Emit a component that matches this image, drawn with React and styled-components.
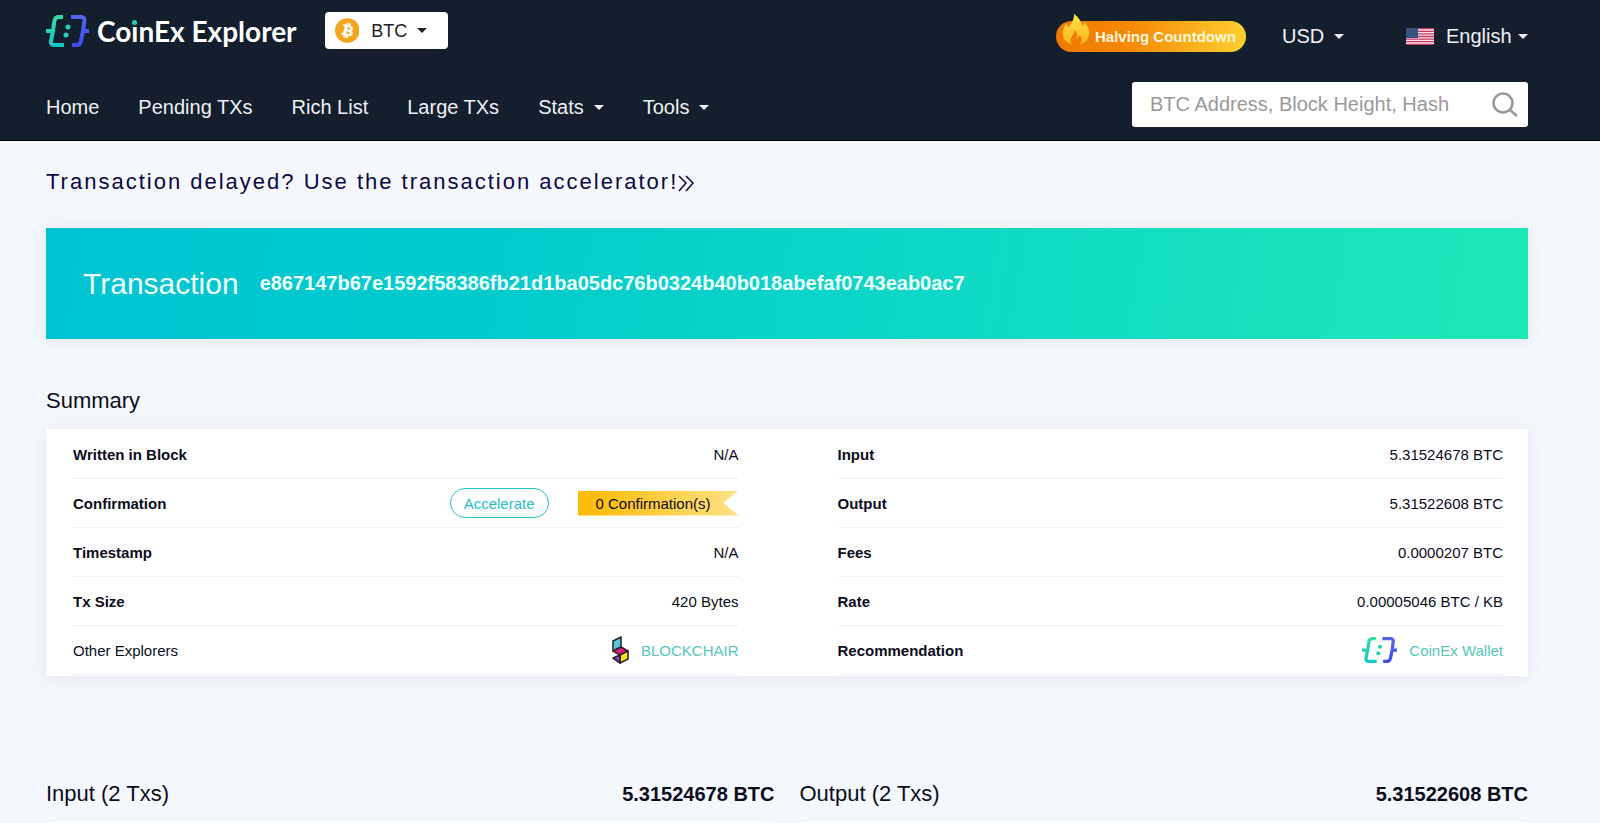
import styled, { createGlobalStyle } from 'styled-components';

const GlobalStyle = createGlobalStyle`
    :root {
        --navy: #131f2d;
        --page: #f4f7fc;
        --ink: #0c0d1c;
        --white: #fff;
        --teal: #26c2c4;
        --link: #55c8bb;
    }

    * {
        box-sizing: border-box;
    }

    html {
        scrollbar-width: none;
    }

    body {
        margin: 0;
        background: var(--page);
        color: var(--ink);
        font-family: "Liberation Sans", Arial, sans-serif;
        font-size: 15px;
    }

    h1, h2, p, dl, dt, dd {
        margin: 0;
        font-weight: 400;
    }

    a {
        color: inherit;
        text-decoration: none;
    }

    button, input, select {
        font: inherit;
        color: inherit;
        border: 0;
        padding: 0;
        background: none;
        outline: none;
    }
`;

const Container = styled.div`
    padding: 0 72px 0 46px;
`;

const StyledHeader = styled.header`
    background: var(--navy);
    color: #eef1f5;
    padding: 12px 0 13px;
    border-bottom: 1px solid #000;
`;

const HeaderRow = styled.div`
    display: flex;
    justify-content: space-between;
    align-items: flex-start;
    height: ${({ $height }) => $height}px;
`;

const Group = styled.div`
    display: flex;
    align-items: center;
    height: ${({ $height }) => $height}px;
`;

const Brand = styled.a`
    display: flex;
    align-items: center;
    gap: 8px;
    margin-right: 28px;
    font-family: Lato, sans-serif;
    font-weight: 700;
    font-size: 28px;
    line-height: 34px;
    color: var(--white);
    white-space: nowrap;
`;

const DottedI = styled.span`
    position: relative;

    &:after {
        content: '';
        position: absolute;
        left: 1px;
        top: 6px;
        width: 5px;
        height: 5px;
        border-radius: 50%;
        background: #22d0bf;
        box-shadow: 0 0 0 1px var(--navy);
    }
`;

const CoinPicker = styled.label`
    display: flex;
    align-items: center;
    width: 123px;
    height: 37px;
    padding: 0 21px 0 10px;
    border-radius: 4px;
    background: var(--white);
    color: #222;
    font-size: 18px;

    select {
        appearance: none;
        width: 46px;
        margin-left: 12px;
    }
`;

const Picker = styled.label`
    display: flex;
    align-items: center;
    font-size: 20px;
    margin-left: ${({ $space }) => $space}px;

    svg:first-child {
        margin-right: 12px;
    }

    select {
        appearance: none;
        width: ${({ $width }) => $width}px;
    }
`;

const StyledCaret = styled.svg`
    width: 10px;
    height: 5px;
    flex: none;
    margin-left: ${({ $space = 0 }) => $space}px;
`;

const Halving = styled.a`
    position: relative;
    display: flex;
    align-items: center;
    height: 31px;
    width: 190px;
    padding-left: 39px;
    border-radius: 16px;
    background: linear-gradient(90deg, #f07800, #f68a08 40%, #fdd02f);
    color: #fff6dc;
    font-size: 15px;
    font-weight: 700;
    line-height: 17px;
    white-space: nowrap;

    svg {
        position: absolute;
        left: 6px;
        bottom: 7px;
    }
`;

const Nav = styled.nav`
    display: flex;
    align-items: center;
    gap: 39px;
    height: 50px;
    font-size: 20px;

    button {
        display: flex;
        align-items: center;
    }
`;

const SearchBox = styled.form`
    display: flex;
    align-items: center;
    width: 396px;
    height: 45px;
    padding: 0 10px 0 18px;
    border-radius: 3px;
    background: var(--white);
    color: #222;

    input {
        flex: 1;
        min-width: 0;
        font-size: 20px;
    }

    input::placeholder {
        color: #999;
        opacity: 1;
    }

    button {
        display: flex;
    }
`;

const Promo = styled.a`
    display: flex;
    align-items: center;
    height: 87px;
    padding-bottom: 5px;
    color: #0b0a45;
    font-size: 22px;
    letter-spacing: 2px;
`;

const Banner = styled.section`
    display: flex;
    align-items: center;
    gap: 21px;
    height: 111px;
    padding: 0 37px;
    background: linear-gradient(100deg, #00c3d2, #03cbcd 30%, #0fd8c6 60%, #1de9b6);
    box-shadow: 0 2px 16px rgba(90, 80, 60, 0.1);
    color: #f0fffd;

    h1 {
        font-size: 30px;
    }

    p {
        font-size: 20px;
        font-weight: 700;
    }
`;

const Heading = styled.h2`
    font-size: 22px;
    line-height: 26px;
`;

const Summary = styled.section`
    padding-top: 49px;

    ${Heading} {
        margin-bottom: 15px;
    }
`;

const Card = styled.div`
    background: var(--white);
    box-shadow: 0 2px 16px rgba(90, 80, 60, 0.1);
`;

const SummaryCard = styled(Card)`
    display: grid;
    grid-template-columns: 1fr 1fr;
    gap: 99px;
    padding: 1px 25px 1px 27px;
`;

const Row = styled.div`
    display: flex;
    align-items: center;
    justify-content: space-between;
    height: 49px;
    border-bottom: 1px solid #f0f0f1;

    dt {
        font-weight: ${({ $light }) => ($light ? 400 : 700)};
    }

    dd {
        display: flex;
        align-items: center;
    }
`;

const AccelerateButton = styled.button`
    height: 30px;
    padding: 0 13px;
    margin-right: 29px;
    border: 1px solid var(--teal);
    border-radius: 15px;
    color: var(--teal);
`;

const Ribbon = styled.span`
    width: 161px;
    line-height: 25px;
    padding-left: 18px;
    background: linear-gradient(90deg, #ffb900, #ffe285);
    clip-path: polygon(0 0, 100% 0, calc(100% - 15px) 50%, 100% 100%, 0 100%);
`;

const ExternalLink = styled.a`
    display: flex;
    align-items: center;
    gap: 12px;
    color: var(--link);
`;

const Transfers = styled.section`
    display: grid;
    grid-template-columns: 1fr 1fr;
    gap: 25px;
    padding-top: 105px;
`;

const TransferHead = styled.div`
    display: flex;
    align-items: center;
    justify-content: space-between;
    margin-bottom: 15px;

    strong {
        font-size: 20px;
    }
`;

const TransferCard = styled(Card)`
    min-height: 1px;
`;

const Caret = ({ space }) => (
    <StyledCaret $space={space} viewBox="0 0 10 5" fill="currentColor" aria-hidden="true">
        <path d="M0 0h10L5 5z" />
    </StyledCaret>
);

const CoinExMark = ({ id, width, height }) => (
    <svg width={width} height={height} viewBox="0 0 43 32" fill="none" aria-hidden="true">
        <defs>
            <linearGradient id={`${id}-l`} gradientUnits="userSpaceOnUse" x1="0" y1="0" x2="0" y2="32">
                <stop offset="0" stopColor="#37dca4" />
                <stop offset="1" stopColor="#12c6cf" />
            </linearGradient>
            <linearGradient id={`${id}-r`} gradientUnits="userSpaceOnUse" x1="0" y1="0" x2="0" y2="32">
                <stop offset="0" stopColor="#5468ee" />
                <stop offset="1" stopColor="#3a4af2" />
            </linearGradient>
        </defs>
        <path d="M17 2h-4q-4 0-4.600 4L7 16 5 26q-.6 4 3 4h10M0 16h8" stroke={`url(#${id}-l)`} strokeWidth="4" />
        <path d="M25 2h10q4 0 3.400 4L37 16l-2 10q-1 4-4 4h-5M36 16h7" stroke={`url(#${id}-r)`} strokeWidth="4" />
        <circle cx="22" cy="12" r="2.500" fill="#25d0b8" />
        <circle cx="20" cy="20" r="2.500" fill="#25d0b8" />
    </svg>
);

const BitcoinIcon = () => (
    <svg width="25" height="25" viewBox="0 0 32 32" aria-hidden="true">
        <circle cx="16" cy="16" r="16" fill="#f5a61d" />
        <path
            fill="#fff"
            stroke="#fff"
            strokeWidth=".6"
            d="M23.200 14c.3-2.100-1.300-3.200-3.500-4l.7-2.800-1.700-.4-.7 2.700-1.400-.3.700-2.800-1.700-.4-.7 2.800-3.500-.9-.5 1.800s1.300.3 1.200.3c.7.200.8.600.8 1l-1.900 7.800c-.1.200-.3.500-.8.400l-1.200-.3-.9 2 3.500.9-.7 2.900 1.700.4.700-2.900 1.400.4-.7 2.800 1.700.4.700-2.800c3 .6 5.200.3 6.100-2.300.8-2.100 0-3.400-1.500-4.200 1.100-.3 1.900-1 2.200-2.500zm-4 5.600c-.5 2.200-4.200 1-5.300.7l.9-3.800c1.200.3 5 .9 4.400 3.100zm.6-5.600c-.5 2-3.500 1-4.500.7l.9-3.400c1 .2 4.100.7 3.600 2.700z"
        />
    </svg>
);

const FlameIcon = () => (
    <svg width="28" height="31" viewBox="0 0 28 31" aria-hidden="true">
        <defs>
            <linearGradient id="flame" x1="0" y1="0" x2="0" y2="1">
                <stop offset="0" stopColor="#ffe24a" />
                <stop offset="1" stopColor="#fdb61c" />
            </linearGradient>
        </defs>
        <path d="M12 0c5 3 6 7 9 12 1-1 1-2 1-4 4 4 6 8 5 13-1 5-4 8-9 9 3-4 2-7-1-9 0 2-1 3-2 3 0-4 0-6-2-8-1 4-3 5-4 8-1 2-1 4 1 6-5-1-9-4-9-9-1-5 2-8 3-12 1 1 1 3 2 4 4-4 6-7 6-13z" fill="url(#flame)" />
    </svg>
);

const FlagIcon = () => (
    <svg width="28" height="17" viewBox="0 0 28 17" aria-hidden="true">
        <path fill="#f3e6ee" d="M0 0h28v17H0z" />
        <path stroke="#c9365f" strokeWidth="1.300" d="M0 .6h28M0 3.300h28M0 5.900h28M0 8.500h28M0 11.100h28M0 13.700h28M0 16.400h28" />
        <path fill="#33507f" d="M0 0h12v10H0z" />
        <path stroke="#506c97" strokeWidth=".8" strokeDasharray="1 1.500" d="M1 2h10M2 4h9M1 6h10M2 8h9" />
    </svg>
);

const SearchIcon = () => (
    <svg width="26" height="25" viewBox="0 0 26 25" fill="none" stroke="#999" strokeWidth="2.500" aria-hidden="true">
        <circle cx="11" cy="11" r="9.500" />
        <path d="M18 18l7 6" />
    </svg>
);

const ChevronsIcon = () => (
    <svg width="17" height="19" viewBox="0 0 17 19" fill="none" stroke="currentColor" strokeWidth="1.500" aria-hidden="true">
        <path d="M1 3l7 7-7 8M8 3l7 7-7 8" />
    </svg>
);

const BlockchairIcon = () => (
    <svg width="17" height="28" viewBox="0 0 17 28" stroke="#2c2530" strokeWidth="1.600" strokeLinejoin="round" aria-hidden="true">
        <path d="M1 5l8-4v10l-8 4z" fill="#55cadb" />
        <path d="M1 15l8-4 7 4-8 4z" fill="#e6197f" />
        <path d="M8 19l8-4v8l-8 4z" fill="#f6e61f" />
        <path d="M1 22l7-3v8z" fill="#8450c8" />
    </svg>
);

const Header = () => (
    <StyledHeader>
        <Container>
            <HeaderRow $height={70}>
                <Group $height={37}>
                    <Brand href="#home">
                        <CoinExMark id="brand" width={43} height={32} />
                        <span>Co<DottedI>i</DottedI>nEx Explorer</span>
                    </Brand>
                    <CoinPicker>
                        <BitcoinIcon />
                        <select aria-label="Coin">
                            <option>BTC</option>
                            <option>BCH</option>
                        </select>
                        <Caret />
                    </CoinPicker>
                </Group>
                <Group $height={48}>
                    <Halving href="#halving">
                        <FlameIcon />
                        Halving Countdown
                    </Halving>
                    <Picker $space={36} $width={42}>
                        <select aria-label="Currency">
                            <option>USD</option>
                            <option>EUR</option>
                        </select>
                        <Caret space={10} />
                    </Picker>
                    <Picker $space={62} $width={66}>
                        <FlagIcon />
                        <select aria-label="Language">
                            <option>English</option>
                        </select>
                        <Caret space={6} />
                    </Picker>
                </Group>
            </HeaderRow>
            <HeaderRow $height={45}>
                <Nav>
                    <a href="#home">Home</a>
                    <a href="#pending">Pending TXs</a>
                    <a href="#rich">Rich List</a>
                    <a href="#large">Large TXs</a>
                    <button type="button">Stats <Caret space={10} /></button>
                    <button type="button">Tools <Caret space={10} /></button>
                </Nav>
                <SearchBox>
                    <input aria-label="Search" placeholder="BTC Address, Block Height, Hash" />
                    <button type="button" aria-label="Search"><SearchIcon /></button>
                </SearchBox>
            </HeaderRow>
        </Container>
    </StyledHeader>
);

const SummaryRow = ({ label, light, children }) => (
    <Row $light={light}>
        <dt>{label}</dt>
        <dd>{children}</dd>
    </Row>
);

const Transfer = ({ title, amount }) => (
    <div>
        <TransferHead>
            <Heading>{title}</Heading>
            <strong>{amount}</strong>
        </TransferHead>
        <TransferCard />
    </div>
);

const App = () => (
    <>
        <GlobalStyle />
        <Header />
        <Container as="main">
            <Promo href="#accelerator">
                Transaction delayed? Use the transaction accelerator!
                <ChevronsIcon />
            </Promo>
            <Banner>
                <h1>Transaction</h1>
                <p>e867147b67e1592f58386fb21d1ba05dc76b0324b40b018abefaf0743eab0ac7</p>
            </Banner>
            <Summary>
                <Heading>Summary</Heading>
                <SummaryCard>
                    <dl>
                        <SummaryRow label="Written in Block">N/A</SummaryRow>
                        <SummaryRow label="Confirmation">
                            <AccelerateButton type="button">Accelerate</AccelerateButton>
                            <Ribbon>0 Confirmation(s)</Ribbon>
                        </SummaryRow>
                        <SummaryRow label="Timestamp">N/A</SummaryRow>
                        <SummaryRow label="Tx Size">420 Bytes</SummaryRow>
                        <SummaryRow label="Other Explorers" light>
                            <ExternalLink href="#blockchair"><BlockchairIcon />BLOCKCHAIR</ExternalLink>
                        </SummaryRow>
                    </dl>
                    <dl>
                        <SummaryRow label="Input">5.31524678 BTC</SummaryRow>
                        <SummaryRow label="Output">5.31522608 BTC</SummaryRow>
                        <SummaryRow label="Fees">0.0000207 BTC</SummaryRow>
                        <SummaryRow label="Rate">0.00005046 BTC / KB</SummaryRow>
                        <SummaryRow label="Recommendation">
                            <ExternalLink href="#wallet">
                                <CoinExMark id="wallet" width={35} height={26} />
                                CoinEx Wallet
                            </ExternalLink>
                        </SummaryRow>
                    </dl>
                </SummaryCard>
            </Summary>
            <Transfers>
                <Transfer title="Input (2 Txs)" amount="5.31524678 BTC" />
                <Transfer title="Output (2 Txs)" amount="5.31522608 BTC" />
            </Transfers>
        </Container>
    </>
);

export default App;
